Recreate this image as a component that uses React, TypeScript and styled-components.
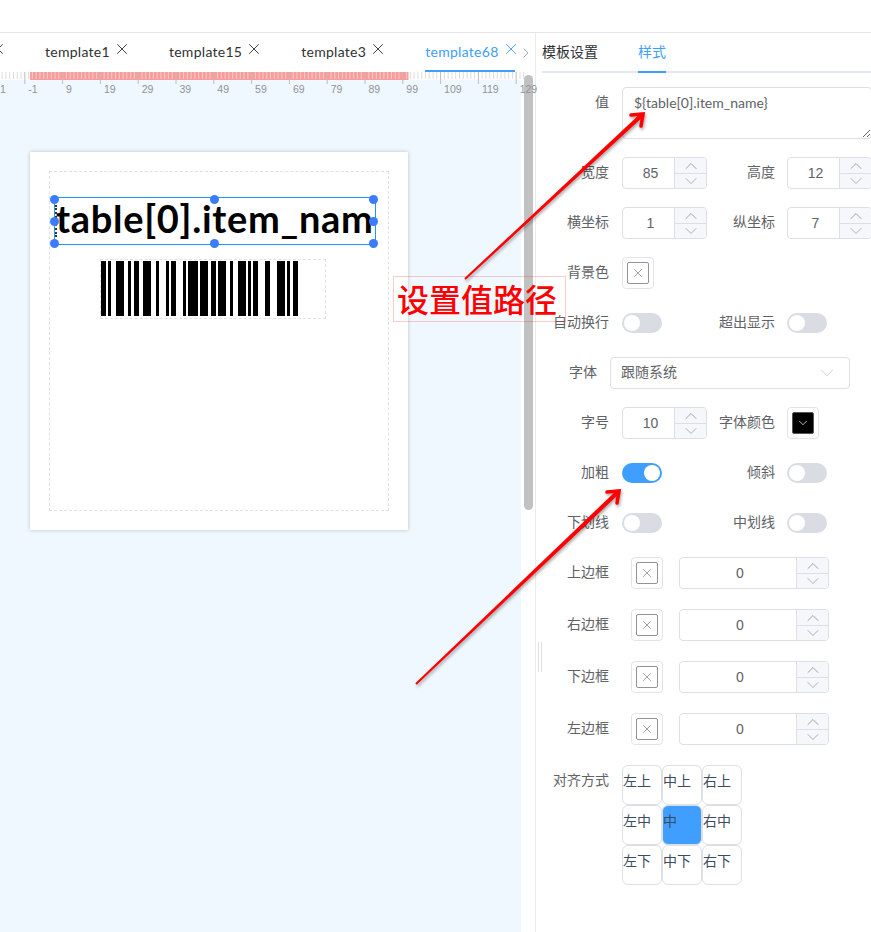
import React from "react";
import styled, { createGlobalStyle } from "styled-components";
import { ChevronDown, ChevronRight, ChevronUp, X } from "lucide-react";

const uiFont = `"Lato", "Noto Sans CJK SC", sans-serif`;

const GlobalStyle = createGlobalStyle`
  html, body {
    margin: 0;
    padding: 0;
    background: #fff;
    overflow: hidden;
  }
  * { box-sizing: border-box; }
`;

const Page = styled.div`
  position: relative;
  width: 871px;
  height: 932px;
  overflow: hidden;
  display: flex;
  flex-direction: column;
  font-family: ${uiFont};
  font-size: 14px;
  color: #606266;
`;

const TopBar = styled.div`
  height: 33px;
  flex: none;
  border-bottom: 1px solid #e4e4ee;
`;

const Main = styled.div`
  flex: 1;
  display: flex;
  min-height: 0;
`;

const Left = styled.div`
  width: 536px;
  flex: none;
  display: flex;
  flex-direction: column;
  border-right: 1px solid #ececec;
  position: relative;
`;

const TabBar = styled.div`
  height: 39px;
  flex: none;
  display: flex;
  align-items: stretch;
  gap: 43px;
  margin-left: -6px;
  overflow: hidden;
  position: relative;
`;

const Tab = styled.div<{ $active?: boolean }>`
  display: flex;
  align-items: center;
  gap: 8px;
  height: 39px;
  white-space: nowrap;
  flex: none;
  letter-spacing: 0.28px;
  color: ${(p) => (p.$active ? "#409eff" : "#303133")};
  border-bottom: 2px solid ${(p) => (p.$active ? "#409eff" : "transparent")};
  svg { margin: -5px -5px 0; flex: none; }
`;

const TabArrow = styled.div`
  position: absolute;
  right: 1px;
  top: 12px;
  color: #909399;
  display: flex;
`;

const Viewport = styled.div`
  flex: 1;
  position: relative;
  min-height: 0;
  display: flex;
  flex-direction: column;
`;

const RulerBar = styled.div`
  height: 28px;
  flex: none;
  background: linear-gradient(to bottom, #fff 8px, #eff7ff 8px) no-repeat;
  background-size: 521px 100%;
  svg { display: block; overflow: visible; position: relative; }
`;

const RulerLabel = styled.text`
  font-family: "Liberation Sans", sans-serif;
  font-size: 10.5px;
  fill: #8f9399;
`;

const Canvas = styled.div`
  flex: 1;
  width: 521px;
  background: #eff7ff;
  padding: 52px 0 0 30px;
`;

const Thumb = styled.div`
  position: absolute;
  left: 524px;
  top: 3px;
  width: 9px;
  height: 435px;
  border-radius: 5px;
  background: #c1c1c1;
`;

const Sheet = styled.div`
  width: 378px;
  height: 378px;
  background: #fff;
  padding: 19px;
  box-shadow: 0 0 4px rgba(0, 0, 0, 0.22);
`;

const PrintArea = styled.div`
  position: relative;
  width: 340px;
  height: 340px;
  border: 1px dashed #e0e0e0;
`;

const TextElement = styled.div`
  position: absolute;
  left: 4px;
  top: 25px;
  width: 322px;
  height: 48px;
  border: 1px solid #2196f3;
  padding-left: 1px;
  font-family: "Lato", sans-serif;
  font-weight: 700;
  font-size: 38px;
  letter-spacing: 0.7px;
  line-height: 41px;
  color: #000;
  white-space: nowrap;
  &::before {
    content: "";
    position: absolute;
    left: 0;
    top: 7px;
    bottom: 7px;
    border-left: 2px dotted #333;
  }
`;

const Handle = styled.span<{ $x: number; $y: number }>`
  position: absolute;
  left: ${(p) => p.$x}px;
  top: ${(p) => p.$y}px;
  width: 9px;
  height: 9px;
  border-radius: 50%;
  background: #3b7cff;
`;

const BarcodeElement = styled.div`
  position: absolute;
  left: 50px;
  top: 87px;
  width: 226px;
  height: 60px;
  border: 1px dashed #e0e0e0;
  svg { display: block; }
`;

const Right = styled.div`
  flex: 1;
  min-width: 0;
  overflow: hidden;
  position: relative;
`;

const PanelTabs = styled.div`
  height: 40px;
  margin-left: 6px;
  margin-right: -4px;
  display: flex;
  gap: 40px;
  border-bottom: 2px solid #e4e7ed;
`;

const PanelTab = styled.div<{ $active?: boolean }>`
  height: 40px;
  line-height: 38px;
  color: ${(p) => (p.$active ? "#409eff" : "#303133")};
  border-bottom: 2px solid ${(p) => (p.$active ? "#409eff" : "transparent")};
`;

const Form = styled.div`
  margin-top: 14px;
  display: flex;
  flex-direction: column;
  gap: 18px;
`;

const Row = styled.div`
  display: flex;
  align-items: center;
  height: 32px;
`;

const TallRow = styled(Row)`
  height: 52px;
  align-items: flex-start;
`;

const Label = styled.label<{ $width?: number }>`
  width: ${(p) => p.$width ?? 73}px;
  flex: none;
  margin-right: ${(p) => (p.$width === 68 ? 12 : 13)}px;
  padding-bottom: 5px;
  text-align: right;
  white-space: nowrap;
  color: #606266;
`;

const TopLabel = styled(Label)`
  padding-bottom: 0;
  line-height: 30px;
  align-self: flex-start;
`;

const ValueInput = styled.textarea`
  width: 250px;
  height: 52px;
  flex: none;
  border: 1px solid #dcdfe6;
  border-radius: 4px;
  padding: 5px 11px;
  font-family: ${uiFont};
  font-size: 14px;
  line-height: 19px;
  color: #606266;
  outline: none;
  background: #fff;
`;

const Stepper = styled.div<{ $width?: number }>`
  width: ${(p) => p.$width ?? 85}px;
  height: 32px;
  flex: none;
  display: flex;
  border: 1px solid #dcdfe6;
  border-radius: 4px;
  overflow: hidden;
`;

const StepperValue = styled.div`
  flex: 1;
  padding-left: 4px;
  text-align: center;
  font-family: "Liberation Sans", sans-serif;
  line-height: 30px;
  color: #606266;
`;

const StepperControls = styled.div`
  width: 32px;
  flex: none;
  display: flex;
  flex-direction: column;
  border-left: 1px solid #dcdfe6;
  background: #f5f7fa;
`;

const StepButton = styled.div<{ $down?: boolean }>`
  height: 15px;
  flex: none;
  display: flex;
  align-items: center;
  justify-content: center;
  color: ${(p) => (p.$down ? "#a0a3a8" : "#8d9096")};
  border-top: ${(p) => (p.$down ? "1px solid #dcdfe6" : "none")};
  svg { margin: -4px; flex: none; }
`;

const ColorPicker = styled.div<{ $indent?: boolean }>`
  width: 32px;
  height: 32px;
  flex: none;
  padding: 4px;
  border: 1px solid #e2e4ea;
  border-radius: 4px;
  margin-left: ${(p) => (p.$indent ? 9 : 0)}px;
  margin-right: ${(p) => (p.$indent ? 16 : 0)}px;
`;

const Swatch = styled.div<{ $color?: string }>`
  width: 100%;
  height: 100%;
  display: flex;
  align-items: center;
  justify-content: center;
  border: 1px solid ${(p) => (p.$color ? "#555" : "#909399")};
  border-radius: 2px;
  background: ${(p) => p.$color ?? "transparent"};
  color: ${(p) => (p.$color ? "#fff" : "#8a8d93")};
`;

const Toggle = styled.div<{ $on?: boolean }>`
  width: 40px;
  height: 20px;
  flex: none;
  display: flex;
  justify-content: ${(p) => (p.$on ? "flex-end" : "flex-start")};
  padding: 2px;
  border-radius: 10px;
  background: ${(p) => (p.$on ? "#409eff" : "#d9dce3")};
  &::before {
    content: "";
    width: 16px;
    height: 16px;
    border-radius: 50%;
    background: #fff;
  }
`;

const ToggleGap = styled.div`
  width: 45px;
  flex: none;
`;

const Select = styled.div`
  width: 240px;
  height: 32px;
  flex: none;
  display: flex;
  align-items: center;
  justify-content: space-between;
  padding: 0 11px 0 10px;
  border: 1px solid #dcdfe6;
  border-radius: 4px;
  color: #606266;
  svg { color: #c0c4cc; }
`;

const SelectText = styled.span`
  padding-bottom: 4px;
`;

const BorderGroup = styled.div`
  display: flex;
  flex-direction: column;
  gap: 20px;
`;

const AlignRow = styled.div`
  display: flex;
  align-items: flex-start;
`;

const AlignGrid = styled.div`
  display: grid;
  grid-template-columns: repeat(3, 40px);
  grid-auto-rows: 40px;
`;

const AlignCell = styled.div<{ $active?: boolean }>`
  border: 1px solid #dcdfe6;
  border-radius: 6px;
  padding-top: 5px;
  line-height: 20px;
  font-size: 14px;
  color: #3d4b5f;
  background: ${(p) => (p.$active ? "#409eff" : "#fff")};
`;

const SplitHandle = styled.div`
  position: absolute;
  left: 2px;
  top: 609px;
  width: 4px;
  height: 30px;
  border-left: 1px solid #dcdfe6;
  border-right: 1px solid #dcdfe6;
`;

const Callout = styled.div`
  position: absolute;
  left: 393px;
  top: 276px;
  width: 173px;
  height: 46px;
  border: 1px solid rgba(255, 0, 0, 0.2);
  padding-left: 3px;
  font-family: "Noto Sans CJK SC", sans-serif;
  font-weight: 500;
  font-size: 32px;
  line-height: 43px;
  color: #ff0000;
  white-space: nowrap;
`;

const ArrowLayer = styled.svg`
  position: absolute;
  left: 0;
  top: 0;
  pointer-events: none;
  filter: drop-shadow(1px 2px 1.5px rgba(0, 0, 0, 0.35));
`;

const tabs = [
  { name: "", active: false },
  { name: "template1", active: false },
  { name: "template15", active: false },
  { name: "template3", active: false },
  { name: "template68", active: true },
];

const rulerTicks = Array.from({ length: 143 }, (_, i) => i);
const rulerLabels = ["-1", "9", "19", "29", "39", "49", "59", "69", "79", "89", "99", "109", "119", "129"];

// bars as [left, right] in page pixels of the barcode
const bars = [
  [101, 106], [108, 111], [116, 124], [128, 131], [134, 139], [143, 151], [156, 159], [166, 169],
  [171, 176], [183, 186], [188, 198], [200, 208], [211, 216], [218, 226], [230, 233], [238, 246],
  [248, 251], [253, 258], [265, 270], [277, 285], [287, 290], [293, 298],
];

const handles = [
  [0, 23], [160, 23], [319, 23],
  [0, 45], [319, 45],
  [0, 67], [160, 67], [319, 67],
];

const alignCells = ["左上", "中上", "右上", "左中", "中", "右中", "左下", "中下", "右下"];

const Ruler = () => (
  <RulerBar>
    <Thumb />
    <svg width={536} height={28}>
      <rect x={30} y={0} width={378.5} height={8} fill="#ff9a9a" />
      {rulerTicks.map((i) => {
        const x = 24.8 - 37.8 + i * 3.78;
        const major = i % 10 === 0;
        return (
          <line
            key={i}
            x1={x}
            x2={x}
            y1={0}
            y2={major ? 12 : 7}
            stroke={major ? "#bdbdbd" : "#d9d9d9"}
            strokeWidth={1}
            opacity={major ? 1 : 0.9}
          />
        );
      })}
      <RulerLabel x={0} y={21}>1</RulerLabel>
      {rulerLabels.map((label, i) => (
        <RulerLabel key={label} x={24.8 + i * 37.8 + 3.5} y={21}>
          {label}
        </RulerLabel>
      ))}
    </svg>
  </RulerBar>
);

const NumberField = ({ value, width }: { value: string; width?: number }) => (
  <Stepper $width={width}>
    <StepperValue>{value}</StepperValue>
    <StepperControls>
      <StepButton>
        <ChevronUp size={20} strokeWidth={1} />
      </StepButton>
      <StepButton $down>
        <ChevronDown size={20} strokeWidth={1} />
      </StepButton>
    </StepperControls>
  </Stepper>
);

const EmptyColor = ({ indent }: { indent?: boolean }) => (
  <ColorPicker $indent={indent}>
    <Swatch>
      <X size={14} strokeWidth={1.4} />
    </Swatch>
  </ColorPicker>
);

const BorderRow = ({ label }: { label: string }) => (
  <Row>
    <Label>{label}</Label>
    <EmptyColor indent />
    <NumberField value="0" width={150} />
  </Row>
);

const Arrow = ({ x1, y1, x2, y2 }: { x1: number; y1: number; x2: number; y2: number }) => {
  const len = Math.hypot(x2 - x1, y2 - y1);
  const nx = -(y2 - y1) / len;
  const ny = (x2 - x1) / len;
  const tail = 1;
  const head = 2.2;
  const points = [
    [x1 + nx * tail, y1 + ny * tail],
    [x2 + nx * head, y2 + ny * head],
    [x2 - nx * head, y2 - ny * head],
    [x1 - nx * tail, y1 - ny * tail],
  ]
    .map((p) => p.join(","))
    .join(" ");
  return (
    <g>
      <polygon points={points} fill="#ff0000" />
      <polyline
        points={`${x2 - 12},${y2 + 1} ${x2},${y2} ${x2 - 2},${y2 + 12}`}
        fill="none"
        stroke="#ff0000"
        strokeWidth={3.6}
        strokeLinecap="round"
        strokeLinejoin="miter"
      />
    </g>
  );
};

export default function App() {
  return (
    <Page>
      <GlobalStyle />
      <TopBar />
      <Main>
        <Left>
          <TabBar>
            {tabs.map((t) => (
              <Tab key={t.name} $active={t.active}>
                {t.name}
                <X size={18} strokeWidth={1.2} />
              </Tab>
            ))}
            <TabArrow>
              <ChevronRight size={16} strokeWidth={1.2} />
            </TabArrow>
          </TabBar>
          <Viewport>
            <Ruler />
            <Canvas>
              <Sheet>
                <PrintArea>
                  <TextElement>table[0].item_nam</TextElement>
                  {handles.map(([x, y]) => (
                    <Handle key={`${x}-${y}`} $x={x} $y={y} />
                  ))}
                  <BarcodeElement>
                    <svg width={224} height={58}>
                      {bars.map(([a, b]) => (
                        <rect key={a} x={a - 101} y={1} width={b - a} height={55} fill="#000" />
                      ))}
                    </svg>
                  </BarcodeElement>
                </PrintArea>
              </Sheet>
            </Canvas>
          </Viewport>
        </Left>
        <Right>
          <SplitHandle />
          <PanelTabs>
            <PanelTab>模板设置</PanelTab>
            <PanelTab $active>样式</PanelTab>
          </PanelTabs>
          <Form>
            <TallRow>
              <TopLabel>值</TopLabel>
              <ValueInput readOnly defaultValue="${table[0].item_name}" />
            </TallRow>
            <Row>
              <Label>宽度</Label>
              <NumberField value="85" />
              <Label $width={68}>高度</Label>
              <NumberField value="12" />
            </Row>
            <Row>
              <Label>横坐标</Label>
              <NumberField value="1" />
              <Label $width={68}>纵坐标</Label>
              <NumberField value="7" />
            </Row>
            <Row>
              <Label>背景色</Label>
              <EmptyColor />
            </Row>
            <Row>
              <Label>自动换行</Label>
              <Toggle />
              <ToggleGap />
              <Label $width={68}>超出显示</Label>
              <Toggle />
            </Row>
            <Row>
              <Label $width={61}>字体</Label>
              <Select>
                <SelectText>跟随系统</SelectText>
                <ChevronDown size={22} strokeWidth={0.9} />
              </Select>
            </Row>
            <Row>
              <Label>字号</Label>
              <NumberField value="10" />
              <Label $width={68}>字体颜色</Label>
              <ColorPicker>
                <Swatch $color="#000">
                  <ChevronDown size={14} strokeWidth={1.2} />
                </Swatch>
              </ColorPicker>
            </Row>
            <Row>
              <Label>加粗</Label>
              <Toggle $on />
              <ToggleGap />
              <Label $width={68}>倾斜</Label>
              <Toggle />
            </Row>
            <Row>
              <Label>下划线</Label>
              <Toggle />
              <ToggleGap />
              <Label $width={68}>中划线</Label>
              <Toggle />
            </Row>
            <BorderGroup>
              <BorderRow label="上边框" />
              <BorderRow label="右边框" />
              <BorderRow label="下边框" />
              <BorderRow label="左边框" />
              <AlignRow>
                <TopLabel>对齐方式</TopLabel>
                <AlignGrid>
                  {alignCells.map((c) => (
                    <AlignCell key={c} $active={c === "中"}>
                      {c}
                    </AlignCell>
                  ))}
                </AlignGrid>
              </AlignRow>
            </BorderGroup>
          </Form>
        </Right>
      </Main>
      <Callout>设置值路径</Callout>
      <ArrowLayer width={871} height={932}>
        <Arrow x1={465} y1={279} x2={643} y2={114} />
        <Arrow x1={416} y1={684} x2={619} y2={491} />
      </ArrowLayer>
    </Page>
  );
}
